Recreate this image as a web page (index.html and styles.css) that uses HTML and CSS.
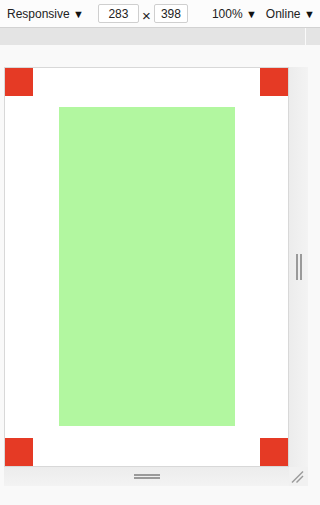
FILE: index.html
```html
<!DOCTYPE html>
<html lang="en">
<head>
    <meta charset="UTF-8">
    <meta name="viewport" content="width=device-width, initial-scale=1.0">
    <title>Responsive Design Mode</title>
    <link rel="stylesheet" href="styles.css">
</head>
<body>
    <div class="toolbar">
        <span class="menu menu-device">Responsive <span class="caret">▼</span></span>
        <input class="size size-w" type="text" value="283">
        <span class="times">×</span>
        <input class="size size-h" type="text" value="398">
        <span class="menu menu-zoom">100% <span class="caret">▼</span></span>
        <span class="menu menu-net">Online <span class="caret">▼</span></span>
    </div>

    <div class="ruler">
        <div class="ruler-main"></div>
        <div class="ruler-end"></div>
    </div>

    <div class="stage">
        <div class="frame">
            <div class="viewport">
                <div class="box red tl"></div>
                <div class="box red tr"></div>
                <div class="box green"></div>
                <div class="box red bl"></div>
                <div class="box red br"></div>
            </div>
            <div class="handle-right">
                <span class="grip-v"></span>
                <span class="grip-v"></span>
            </div>
            <div class="handle-bottom">
                <span class="grip-h"></span>
                <span class="grip-h"></span>
            </div>
            <div class="handle-corner">
                <svg width="19" height="19" viewBox="0 0 19 19">
                    <line x1="3" y1="15.5" x2="14" y2="4.5" stroke="#9a9a9a" stroke-width="1.4"/>
                    <line x1="7.5" y1="15.5" x2="14" y2="9" stroke="#9a9a9a" stroke-width="1.4"/>
                </svg>
            </div>
        </div>
    </div>
</body>
</html>
```

FILE: styles.css
```css
body {
    margin: 0;
    width: 320px;
    height: 505px;
    overflow: hidden;
    background-color: #f9f9f9;
    font-family: "Liberation Sans", Arial, sans-serif;
    color: #222;
}
.toolbar {
    display: flex;
    align-items: center;
    height: 27px;
    background-color: #fcfcfc;
    border-bottom: 1px solid #d2d2d2;
    font-size: 12px;
}
.menu {
    white-space: nowrap;
}
.caret {
    font-size: 11px;
    color: #111;
}
.menu-device {
    margin-left: 7px;
}
.size {
    box-sizing: border-box;
    height: 19px;
    padding: 0;
    border: 1px solid #cfcfcf;
    border-radius: 2px;
    background: #fff;
    font-family: inherit;
    font-size: 12px;
    color: #222;
    text-align: center;
}
.size-w {
    width: 41px;
    margin-left: 14px;
}
.size-h {
    width: 34px;
}
.times {
    width: 15px;
    text-align: center;
    font-size: 15px;
    margin-top: 3px;
}
.menu-zoom {
    margin-left: 24px;
}
.menu-net {
    margin-left: 9px;
}
.ruler {
    display: flex;
    height: 17px;
}
.ruler-main {
    flex: 1;
    background-color: #e4e4e4;
}
.ruler-end {
    width: 14px;
    border-left: 1px solid #fafafa;
    background-color: #e4e4e4;
}
.stage {
    padding: 22px 0 0 4px;
}
.frame {
    display: grid;
    grid-template-columns: 285px 19px;
    grid-template-rows: 400px 19px;
    width: 304px;
}
.viewport {
    display: grid;
    grid-template-columns: 28px 26px 176px 25px 28px;
    grid-template-rows: 28px 11px 319px 12px 28px;
    border: 1px solid #d8d8d8;
    background-color: #fff;
}
.red {
    background-color: #e53a25;
}
.tl {
    grid-column: 1;
    grid-row: 1;
}
.tr {
    grid-column: 5;
    grid-row: 1;
}
.bl {
    grid-column: 1;
    grid-row: 5;
}
.br {
    grid-column: 5;
    grid-row: 5;
}
.green {
    grid-column: 3;
    grid-row: 3;
    background-color: #b2f7a0;
}
.handle-right {
    display: flex;
    justify-content: center;
    align-items: center;
    gap: 2px;
    background: linear-gradient(to right, #ececec, #f3f3f3);
}
.grip-v {
    width: 2px;
    height: 26px;
    background-color: #9a9a9a;
}
.handle-bottom {
    display: flex;
    flex-direction: column;
    align-items: center;
    justify-content: center;
    gap: 1px;
    background: linear-gradient(to bottom, #ececec, #f3f3f3);
}
.grip-h {
    width: 26px;
    height: 2px;
    background-color: #9a9a9a;
}
.handle-corner {
    background-color: #f1f1f1;
}
.handle-corner svg {
    display: block;
}
```
